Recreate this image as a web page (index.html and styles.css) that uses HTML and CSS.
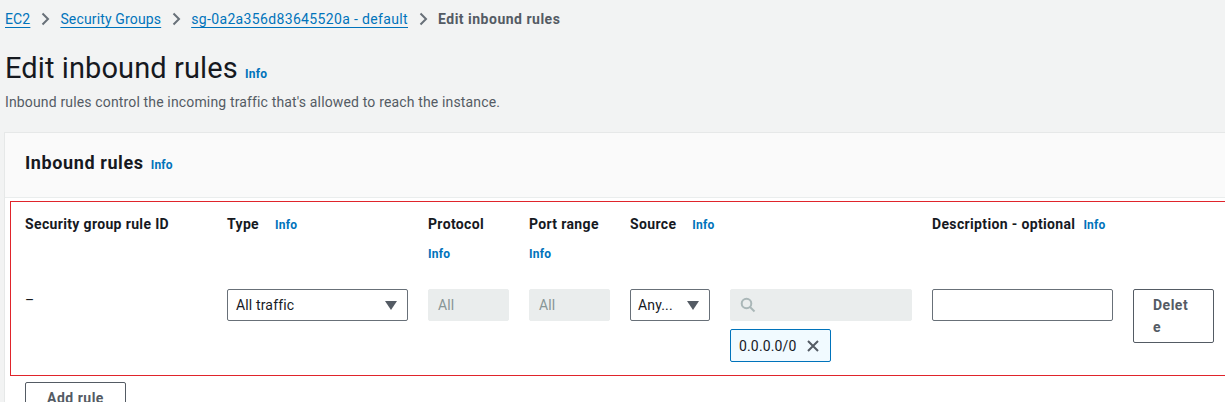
FILE: index.html
```html
<!DOCTYPE html>
<html lang="en">
<head>
<meta charset="utf-8">
<title>Edit inbound rules</title>
<link rel="stylesheet" href="styles.css">
</head>
<body>
<nav class="crumbs">
  <a href="#" class="crumb-link">EC2</a>
  <svg class="chev" viewBox="0 0 16 16" width="16" height="16"><path d="M5.5 2.5 11 8l-5.5 5.5" fill="none" stroke="#687078" stroke-width="2"/></svg>
  <a href="#" class="crumb-link">Security Groups</a>
  <svg class="chev" viewBox="0 0 16 16" width="16" height="16"><path d="M5.5 2.5 11 8l-5.5 5.5" fill="none" stroke="#687078" stroke-width="2"/></svg>
  <a href="#" class="crumb-link crumb-id">sg-0a2a356d83645520a - default</a>
  <svg class="chev" viewBox="0 0 16 16" width="16" height="16"><path d="M5.5 2.5 11 8l-5.5 5.5" fill="none" stroke="#687078" stroke-width="2"/></svg>
  <span class="crumb-current">Edit inbound rules</span>
</nav>

<header class="page-head">
  <h1 class="page-title">Edit inbound rules <a href="#" class="info info-title">Info</a></h1>
  <p class="page-desc">Inbound rules control the incoming traffic that's allowed to reach the instance.</p>
</header>

<section class="panel">
  <div class="panel-head">
    <h2 class="panel-title">Inbound rules <a href="#" class="info">Info</a></h2>
  </div>
  <div class="panel-body">
    <div class="rules">
      <div class="rules-grid">
        <div class="th">Security group rule ID</div>
        <div class="th"><span>Type</span><a href="#" class="info">Info</a></div>
        <div class="th"><span>Protocol</span><a href="#" class="info">Info</a></div>
        <div class="th"><span>Port range</span><a href="#" class="info">Info</a></div>
        <div class="th th-source"><span>Source</span><a href="#" class="info">Info</a></div>
        <div class="th th-desc"><span>Description - optional</span><a href="#" class="info">Info</a></div>
        <div class="th"></div>

        <div class="td td-id">–</div>
        <div class="td">
          <div class="select"><span>All traffic</span><span class="caret"></span></div>
        </div>
        <div class="td"><div class="input disabled">All</div></div>
        <div class="td"><div class="input disabled">All</div></div>
        <div class="td">
          <div class="select select-sm"><span>Any...</span><span class="caret"></span></div>
        </div>
        <div class="td td-stack">
          <div class="input disabled search">
            <svg viewBox="0 0 16 16" width="16" height="16"><circle cx="6.5" cy="6.5" r="4.8" fill="none" stroke="#aab7b8" stroke-width="2"/><path d="M10 10l4.5 4.5" stroke="#aab7b8" stroke-width="2" fill="none"/></svg>
          </div>
          <div class="token">0.0.0.0/0
            <svg viewBox="0 0 16 16" width="16" height="16"><path d="M3 3l10 10M13 3 3 13" stroke="#545b64" stroke-width="2" fill="none"/></svg>
          </div>
        </div>
        <div class="td"><div class="input"></div></div>
        <div class="td"><button class="btn btn-delete">Delete</button></div>
      </div>
    </div>
    <button class="btn btn-add">Add rule</button>
  </div>
</section>
</body>
</html>
```

FILE: styles.css
```css
html, body {
  margin: 0;
  padding: 0;
  overflow: hidden;
}
body {
  background: #f2f3f3;
  font-family: Roboto, "Open Sans", sans-serif;
  color: #16191f;
  font-size: 14px;
  line-height: 20px;
  letter-spacing: 0.15px;
  width: 1225px;
  height: 402px;
}
.crumbs {
  display: flex;
  align-items: center;
  padding: 9px 0 0 5px;
  height: 20px;
}
.crumb-link {
  color: #0073bb;
  text-decoration: underline;
  text-underline-offset: 3px;
}
.crumb-id {
  letter-spacing: 0.35px;
}
.chev {
  margin: 0 7px 0 7px;
}
.crumb-current {
  color: #545b64;
  font-weight: 700;
  letter-spacing: 0.5px;
}
.page-head {
  padding: 21px 0 0 5px;
}
.page-title {
  margin: 0;
  font-size: 29px;
  line-height: 36px;
  font-weight: 400;
  color: #16191f;
  letter-spacing: 0.1px;
}
.info {
  color: #0073bb;
  font-size: 12px;
  font-weight: 700;
  text-decoration: none;
  letter-spacing: 0.2px;
}
.info-title {
  margin-left: 0;
}
.page-desc {
  margin: 0;
  color: #545b64;
  font-size: 14px;
  line-height: 20px;
}
.panel {
  margin: 20px 0 0 4px;
  width: 1260px;
  background: #fff;
  border-left: 1px solid #e6e8e8;
  border-top: 1px solid #e6e8e8;
}
.panel-head {
  background: #fafafa;
  border-bottom: 1px solid #eaeded;
  padding: 19px 20px 21px;
}
.panel-title {
  margin: 0;
  font-size: 18px;
  line-height: 22px;
  font-weight: 700;
  letter-spacing: 0.6px;
}
.panel-title .info {
  margin-left: 2px;
}
.panel-body {
  padding: 3px 0 0 5px;
}
.rules {
  width: 1210px;
  border: 1px solid #e0242b;
  padding: 12px 0 13px 14px;
}
.rules-grid {
  display: grid;
  grid-template-columns: 182px 181px 81px 81px 80px 182px 181px 81px;
  column-gap: 20px;
  row-gap: 25px;
}
.th {
  font-weight: 700;
  display: flex;
  flex-wrap: wrap;
  align-items: baseline;
  column-gap: 16px;
  row-gap: 10px;
  line-height: 20px;
  letter-spacing: 0.35px;
}
.th-source {
  grid-column: 5 / span 2;
}
.th-desc {
  column-gap: 8px;
}
.td-id {
  line-height: 20px;
  padding-top: 1px;
}
.td-stack {
  display: flex;
  flex-direction: column;
  align-items: flex-start;
  gap: 8px;
}
.select, .input {
  box-sizing: border-box;
  height: 32px;
  border: 1px solid #687078;
  border-radius: 2px;
  background: #fff;
  display: flex;
  align-items: center;
  padding: 0 10px 0 8px;
  width: 100%;
}
.select {
  justify-content: space-between;
}
.select-sm {
  padding: 0 10px 0 7px;
}
.caret {
  width: 0;
  height: 0;
  border-left: 6px solid transparent;
  border-right: 6px solid transparent;
  border-top: 9px solid #545b64;
}
.input.disabled {
  background: #eaeded;
  border-color: #eaeded;
  color: #879596;
  padding-left: 9px;
}
.search {
  padding-left: 8px;
}
.token {
  box-sizing: border-box;
  height: 33px;
  border: 1px solid #0073bb;
  border-radius: 2px;
  background: #f1faff;
  display: flex;
  align-items: center;
  gap: 8px;
  padding: 0 9px 0 8px;
  color: #16191f;
}
.btn {
  font-family: inherit;
  font-size: 14px;
  font-weight: 700;
  color: #545b64;
  background: #fff;
  border: 1px solid #545b64;
  border-radius: 2px;
  letter-spacing: 0.5px;
  cursor: pointer;
}
.btn-delete {
  box-sizing: border-box;
  width: 81px;
  height: 54px;
  padding: 0 19px;
  line-height: 22px;
  text-align: left;
  word-break: break-all;
}
.btn-add {
  margin: 6px 0 0 15px;
  width: 101px;
  height: 32px;
  padding: 4px 20px;
}
```
